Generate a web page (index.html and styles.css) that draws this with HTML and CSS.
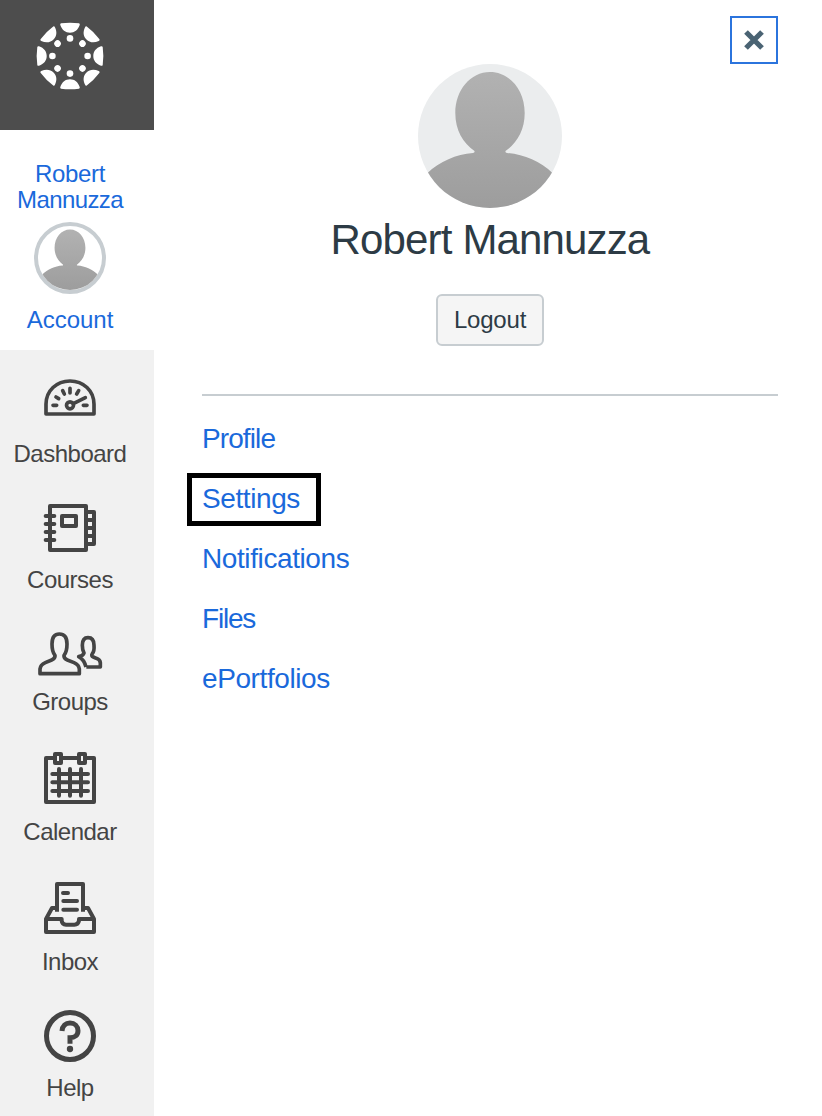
FILE: index.html
```html
<!DOCTYPE html>
<html lang="en">
<head>
<meta charset="utf-8">
<title>Account</title>
<link rel="stylesheet" href="styles.css">
</head>
<body>
<svg class="defs" width="0" height="0" aria-hidden="true">
  <defs>
    <linearGradient id="shade" x1="0" y1="0" x2="0" y2="144" gradientUnits="userSpaceOnUse"><stop offset="0" stop-color="#b3b3b3"/><stop offset="1" stop-color="#9d9d9d"/></linearGradient>
    <symbol id="person" viewBox="0 0 144 144">
      <g fill="url(#shade)"><path d="M72 8C91.500 8 106.700 26 106.700 49C106.700 66 99 79 87.500 87Q87 88.500 89 89C106 90.500 122 97 135 109.500V144H9V109.500C22 97 38 90.500 55 89Q57 88.500 56.500 87C45 79 37.300 66 37.300 49C37.300 26 52.500 8 72 8Z"/></g>
    </symbol>
    <path id="petal" d="M-9 -32.700Q0 -34 9 -32.700Q10.200 -32.300 9.700 -31C8 -26 4.500 -23.300 0 -23.300S-8 -26 -9.700 -31Q-10.200 -32.300 -9 -32.700Z"/>
    <g id="ray"><use href="#petal"/><circle cy="-17.600" r="3.300"/></g>
  </defs>
</svg>
<div class="app">
  <nav class="sidebar">
    <a class="logo">
      <svg width="70" height="70" viewBox="-35 -35 70 70" fill="#fff">
        <use href="#ray"/><use href="#ray" transform="rotate(45)"/><use href="#ray" transform="rotate(90)"/><use href="#ray" transform="rotate(135)"/><use href="#ray" transform="rotate(180)"/><use href="#ray" transform="rotate(225)"/><use href="#ray" transform="rotate(270)"/><use href="#ray" transform="rotate(315)"/>
      </svg>
    </a>
    <a class="account">
      <span class="account-name"><span class="first-name">Robert</span><br>Mannuzza</span>
      <span class="account-avatar"><svg width="64" height="64"><use href="#person"/></svg></span>
      <span class="account-label">Account</span>
    </a>
    <a class="item item-dashboard">
      <svg class="icon" viewBox="0 0 240 195"><path d="M48 147V118C48 77 80 48 120 48S192 77 192 118V147Z"/><g class="round"><path d="M69 121H80M160 121H171M78 96L86 101M98 77L103 87M120 70V84M146 77L140 87M130 116L166 98"/><circle cx="120" cy="121" r="10.500"/></g></svg>
      <span>Dashboard</span>
    </a>
    <a class="item item-courses">
      <svg class="icon" viewBox="0 0 240 195"><path d="M60 33H168V165H60ZM168 51H192V147H168M168 75H192M168 99H192M168 123H192"/><rect x="96" y="63" width="42" height="30"/><path class="round" d="M47 63H73M47 87H73M47 111H73M47 135H73"/></svg>
      <span>Courses</span>
    </a>
    <a class="item item-groups">
      <svg class="icon" viewBox="0 0 240 195"><path d="M30 161V147C31 137 37 132 46 128L65 120C73 117 76 114 75 106C68 98 66 87 66 72C66 51 73 42 88 42S111 51 111 72C111 87 109 98 102 106C101 114 104 117 112 120L132 128C141 132 147 137 148 147V161Z"/><path d="M169 141H211V128C210 120 206 117 199 115L190 111C185 109 184 106 187 101C191 96 193 87 192 76C192 61 186 53 174 53S157 61 157 76C157 87 159 94 162 99C160 106 152 109 146 110C157 116 164 125 168 141"/></svg>
      <span>Groups</span>
    </a>
    <a class="item item-calendar">
      <svg class="icon" viewBox="0 0 240 195"><path d="M75 39H48V171H192V39H165M93 39H147"/><rect x="75" y="27" width="18" height="27"/><rect x="147" y="27" width="18" height="27"/><path class="round" d="M87 72V152M120 72V152M153 72V152M67 87H174M67 112H174M67 138H174"/></svg>
      <span>Calendar</span>
    </a>
    <a class="item item-inbox">
      <svg class="icon" viewBox="0 0 240 195"><path d="M81 110V27H159V110M76 99H66L48 132V171H192V132L174 99H164M48 132H95V137Q96 149 108 149H133Q145 149 147 137V132H192"/><path class="round" d="M99 54H114M100 78H141M100 104H141"/></svg>
      <span>Inbox</span>
    </a>
    <a class="item item-help">
      <svg class="icon" viewBox="0 0 240 195"><circle class="ring" cx="120" cy="108" r="70.500"/><path class="question" d="M96 93C97 77 107 69 120 69C134 69 144 79 144 92C144 106 134 113 120 113V131"/><circle class="dot" cx="120" cy="147" r="9.500"/></svg>
      <span>Help</span>
    </a>
  </nav>
  <main class="tray">
    <button class="close" aria-label="Close"><svg width="44" height="44" viewBox="0 0 44 44"><path d="M14 14L30 30M30 14L14 30"/></svg></button>
    <header class="profile">
      <span class="avatar"><svg width="144" height="144"><use href="#person"/></svg></span>
      <h1>Robert Mannuzza</h1>
      <button class="logout">Logout</button>
    </header>
    <ul class="links">
      <li><a class="profile-link">Profile</a></li>
      <li><a class="current">Settings</a></li>
      <li><a class="notifications-link">Notifications</a></li>
      <li><a class="files-link">Files</a></li>
      <li><a class="portfolio-link">ePortfolios</a></li>
    </ul>
  </main>
</div>
</body>
</html>
```
FILE: styles.css
```css
*, *::before, *::after { box-sizing: border-box; }
body { margin: 0; background: #fff; color: #2d3b45; font-family: "Liberation Sans", Arial, sans-serif; }
.defs { position: absolute; }
.app { display: flex; width: 822px; height: 1116px; overflow: hidden; }
.sidebar { width: 154px; flex: none; display: flex; flex-direction: column; background: #f1f1f1; color: #444; font-size: 24px; line-height: 26px; letter-spacing: -0.5px; text-align: center; }
.logo { flex: none; height: 130px; background: #4d4d4d; padding: 21px 14px 0 0; }
.logo svg { display: block; margin: 0 auto; }
.account { flex: none; height: 220px; padding: 31px 14px 0 0; background: #fff; color: #1a69db; display: flex; flex-direction: column; align-items: center; }
.account-name { letter-spacing: -0.6px; }
.first-name { letter-spacing: -0.3px; }
.account-label { letter-spacing: 0; }
.account-avatar { width: 72px; height: 72px; margin: 9px 0 13px; border: 4px solid #c7cdd1; border-radius: 50%; overflow: hidden; }
.account-avatar svg, .avatar svg { display: block; }
.item { display: flex; flex-direction: column; align-items: center; height: 125px; padding-right: 14px; flex: none; }
.icon { width: 80px; height: 65px; flex: none; fill: none; stroke: #444; stroke-width: 12; stroke-linejoin: round; }
.round { stroke-linecap: round; }
.item span { margin-top: 11px; }
.item-dashboard { height: 145px; padding-top: 15px; }
.item-dashboard .icon { stroke-width: 11; }
.item-courses span { margin-top: 7px; }
.item-groups span { margin-top: 4px; }
.item-groups .icon { stroke-width: 11; }
.item-calendar { height: 130px; }
.item-calendar span, .item-inbox span { margin-top: 9px; }
.item-help span { margin-top: 10px; }
.icon .ring { stroke-width: 15; }
.icon .question { stroke-width: 15; stroke-linejoin: miter; }
.icon .dot { fill: #444; stroke: none; }
.tray { flex: 1; display: flex; flex-direction: column; padding: 16px 44px 0 48px; }
.close { align-self: flex-end; width: 48px; height: 48px; padding: 0; border: 2px solid #2b74dd; background: #fff; }
.close svg { display: block; fill: none; stroke: #4a6373; stroke-width: 5.2; }
.profile { display: flex; flex-direction: column; align-items: center; width: 576px; height: 332px; border-bottom: 2px solid #c7cdd1; }
.avatar { width: 144px; height: 144px; border-radius: 50%; overflow: hidden; background: #ebedee; }
h1 { margin: 8px 0 30px; font-size: 42px; line-height: 48px; font-weight: 400; letter-spacing: -0.85px; white-space: nowrap; }
.logout { width: 108px; height: 52px; padding: 0; border: 2px solid #c7cdd1; border-radius: 6px; background: #f5f5f5; color: #2d3b45; font: 24px "Liberation Sans", Arial, sans-serif; letter-spacing: -0.2px; }
.links { list-style: none; margin: 13px 0 0; padding: 0; color: #1a69db; font-size: 28px; line-height: 60px; letter-spacing: -0.4px; }
.links li { height: 60px; }
.profile-link { letter-spacing: -0.9px; }
.files-link { letter-spacing: -1.2px; }
.current { position: relative; }
.current::after { content: ""; position: absolute; left: -15px; top: -10px; width: 134px; height: 53px; border: 5px solid #000; }
```
